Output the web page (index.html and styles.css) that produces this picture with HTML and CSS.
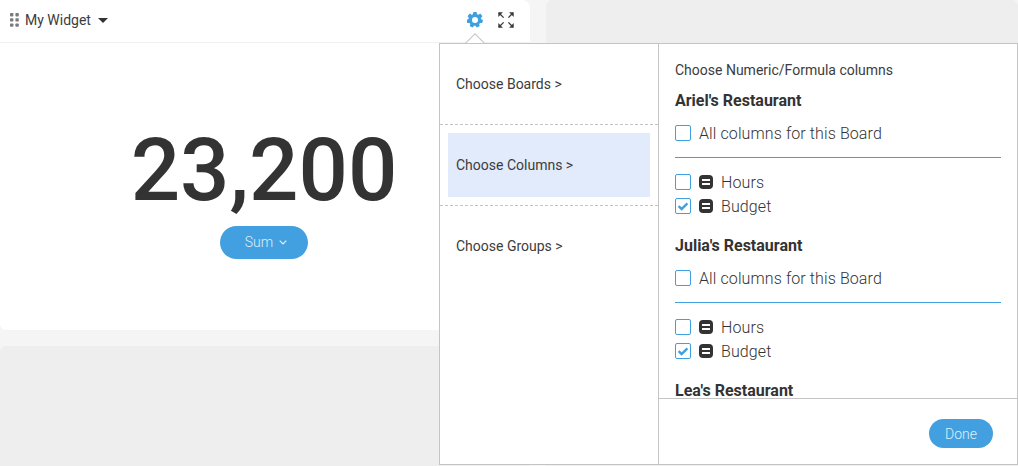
FILE: index.html
```html
<!DOCTYPE html>
<html lang="en">
<head>
<meta charset="utf-8">
<title>My Widget</title>
<link rel="stylesheet" href="styles.css">
</head>
<body>
<div class="board">
  <section class="widget">
    <header class="widget-head">
      <div class="title">
        <svg class="grip" width="9" height="14" viewBox="0 0 9 14"><g fill="#7b7b7b"><rect x="0" y="0" width="3.4" height="3.4" rx=".8"/><rect x="5.4" y="0" width="3.4" height="3.4" rx=".8"/><rect x="0" y="5.2" width="3.4" height="3.4" rx=".8"/><rect x="5.4" y="5.2" width="3.4" height="3.4" rx=".8"/><rect x="0" y="10.4" width="3.4" height="3.4" rx=".8"/><rect x="5.4" y="10.4" width="3.4" height="3.4" rx=".8"/></g></svg>
        <span class="title-text">My Widget</span>
        <span class="caret"></span>
      </div>
      <div class="tools">
        <svg width="16" height="16" viewBox="0 0 24 24"><path fill="#3fa0e0" fill-rule="evenodd" d="M9.6 0h4.8l.7 3.3 2 .9L20 2.4l3.2 4-2.3 2.5.5 2.1 2.6 1-.1 0v.5l-1 4-3.2-.1-1.4 1.7.7 3.2-4.4 2-1.9-2.7h-2.2l-1.9 2.7-4.4-2 .7-3.2-1.4-1.7-3.2.1-1.1-4.5 3-1.4.5-2.1L.8 6.4l3.2-4 2.9 1.8 2-.9zM12 7.5a4.5 4.5 0 1 0 0 9 4.5 4.5 0 0 0 0-9z"/></svg>
        <svg width="16" height="16" viewBox="0 0 16 16"><g fill="none" stroke="#3a3a3a" stroke-width="1.3"><path d="M1 1l4.6 4.6M15 1l-4.6 4.6M1 15l4.6-4.6M15 15l-4.6-4.6"/></g><g fill="#3a3a3a"><path d="M.3.3h4.6L.3 4.9zM15.7.3h-4.6l4.6 4.6zM.3 15.7h4.6L.3 11.1zM15.7 15.7h-4.6l4.6-4.6z"/></g></svg>
      </div>
    </header>
    <div class="widget-body">
      <div class="number">23,200</div>
      <button class="pill sum">Sum <svg width="8" height="5" viewBox="0 0 8 5"><path d="M.7.7 4 4l3.3-3.3" fill="none" stroke="#e8f4fc" stroke-width="1.1"/></svg></button>
    </div>
  </section>
  <section class="ghost"></section>
  <section class="ghost"></section>
  <section class="ghost"></section>
</div>

<div class="arrow"></div>
<aside class="popup">
  <nav class="steps">
    <div class="step">Choose Boards &gt;</div>
    <div class="step active"><span>Choose Columns &gt;</span></div>
    <div class="step">Choose Groups &gt;</div>
  </nav>
  <div class="panel">
    <div class="scroll">
      <p class="hint">Choose Numeric/Formula columns</p>
      <h3 class="board-name first">Ariel's Restaurant</h3>
      <label class="row all"><span class="box"></span>All columns for this Board</label>
      <hr class="rule">
      <label class="row"><span class="box"></span><span class="type"><i></i></span>Hours</label>
      <label class="row"><span class="box"><svg width="14" height="14" viewBox="0 0 14 14"><path d="M2.6 7.2 5.6 10l5.8-5.6" fill="none" stroke="#3fa0e0" stroke-width="2.4"/></svg></span><span class="type"><i></i></span>Budget</label>
      <h3 class="board-name">Julia's Restaurant</h3>
      <label class="row all"><span class="box"></span>All columns for this Board</label>
      <hr class="rule">
      <label class="row"><span class="box"></span><span class="type"><i></i></span>Hours</label>
      <label class="row"><span class="box"><svg width="14" height="14" viewBox="0 0 14 14"><path d="M2.6 7.2 5.6 10l5.8-5.6" fill="none" stroke="#3fa0e0" stroke-width="2.4"/></svg></span><span class="type"><i></i></span>Budget</label>
      <h3 class="board-name">Lea's Restaurant</h3>
    </div>
    <footer class="panel-foot"><button class="pill done">Done</button></footer>
  </div>
</aside>
</body>
</html>
```
FILE: styles.css
```css
* { box-sizing: border-box; }
html, body { margin: 0; height: 100%; }
body {
  position: relative;
  width: 1018px;
  height: 466px;
  overflow: hidden;
  background: #f5f5f5;
  font-family: Roboto, "Liberation Sans", sans-serif;
  color: #333;
}
.board {
  display: grid;
  grid-template-columns: 530px 472px;
  grid-auto-rows: 330px;
  column-gap: 16px;
  row-gap: 16px;
  height: 466px;
  overflow: hidden;
}
.widget {
  background: #fff;
  border-radius: 0 8px 6px 6px;
}
.ghost { background: #eee; border-radius: 6px; }
.widget-head {
  height: 43px;
  border-bottom: 1px solid #f1f1f1;
  display: flex;
  align-items: center;
  justify-content: space-between;
  padding: 0 16px 2px 10px;
}
.title { display: flex; align-items: center; }
.title-text { font-size: 14px; margin-left: 6px; color: #3c3c3c; }
.caret {
  margin-left: 7px;
  border: 5px solid transparent;
  border-top: 5px solid #333;
  border-bottom: 0;
}
.tools { display: flex; align-items: center; gap: 15px; }
.widget-body { display: flex; flex-direction: column; align-items: center; padding: 71px 2px 0 0; }
.number { font-size: 87px; line-height: 112px; font-weight: 500; color: #333; }
.pill {
  border: 0;
  background: #42a0e0;
  color: #dff0fb;
  font-family: inherit;
  font-weight: 300;
  border-radius: 17px;
  font-size: 14px;
}
.sum { width: 88px; height: 33px; display: flex; align-items: center; justify-content: center; gap: 6px; padding: 0 0 1px 4px; }
.done { width: 64px; height: 29px; }
.arrow {
  position: absolute;
  left: 468px;
  top: 36px;
  width: 14px;
  height: 14px;
  background: #fff;
  border: 1px solid #c4c4c4;
  transform: rotate(45deg);
}
.popup {
  position: absolute;
  left: 439px;
  top: 43px;
  width: 579px;
  height: 422px;
  background: #fff;
  border: 1px solid #c4c4c4;
  display: flex;
}
.arrow + .popup::before {
  content: "";
  position: absolute;
  left: 23px;
  top: 0;
  width: 24px;
  height: 9px;
  background: #fff;
}
.steps { width: 219px; border-right: 1px solid #c4c4c4; flex: none; font-size: 14px; color: #3c3c3c; }
.step {
  height: 81px;
  display: flex;
  align-items: center;
  padding-left: 16px;
  border-bottom: 1px dashed #c4c4c4;
}
.step:last-child { border-bottom-color: transparent; }
.step.active { padding: 8px; }
.step.active span { flex: 1; align-self: stretch; display: flex; align-items: center; background: #e2ebfb; padding-left: 8px; }
.panel { flex: 1; display: flex; flex-direction: column; min-width: 0; }
.scroll { height: 354px; overflow: hidden; padding: 0 16px; }
.hint { margin: 19px 0 0; font-size: 14px; line-height: 15px; color: #3c3c3c; }
.board-name { margin: 19px 0 0; font-size: 16px; line-height: 18px; font-weight: 700; }
.board-name.first { margin-top: 14px; }
.row { display: flex; align-items: center; height: 24px; font-size: 16px; font-weight: 300; letter-spacing: .1px; color: #333; }
.row.all { margin-top: 11px; }
.box {
  width: 16px;
  height: 16px;
  border: 1px solid #3fa0e0;
  border-radius: 2px;
  margin-right: 8px;
  display: flex;
  align-items: center;
  justify-content: center;
  flex: none;
}
.type {
  width: 14px;
  height: 14px;
  background: #333;
  border-radius: 4px;
  margin-right: 8px;
  display: flex;
  align-items: center;
  justify-content: center;
}
.type i { width: 8px; height: 6px; border-top: 2px solid #fff; border-bottom: 2px solid #fff; }
.rule { border: 0; border-top: 1px solid #3fa0e0; margin: 12px 0; }
.panel-foot {
  flex: 1;
  border-top: 1px solid #c4c4c4;
  display: flex;
  justify-content: flex-end;
  align-items: flex-start;
  padding: 20px 24px 0 0;
}
```
